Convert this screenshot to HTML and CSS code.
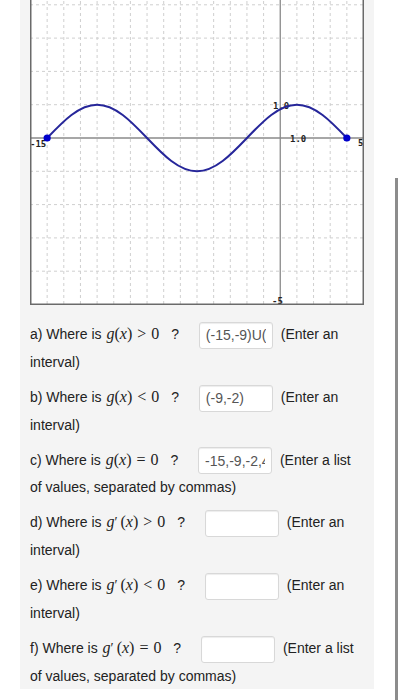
FILE: index.html
```html
<!DOCTYPE html>
<html lang="en">
<head>
    <meta charset="UTF-8">
    <meta name="viewport" content="width=device-width, initial-scale=1.0">
    <title>Graph of g(x)</title>
    <link rel="stylesheet" href="styles.css">
</head>
<body>

    <div class="panel">
        <div class="graph">
            <svg width="334" height="334" viewBox="0 0 334 334">
                <!-- grid: 1 unit = 16.65px across, 33.3px up -->
                <g class="grid">
                    <line x1="17.15" y1="0" x2="17.15" y2="334"/>
                    <line x1="33.8" y1="0" x2="33.8" y2="334"/>
                    <line x1="50.45" y1="0" x2="50.45" y2="334"/>
                    <line x1="67.1" y1="0" x2="67.1" y2="334"/>
                    <line x1="83.75" y1="0" x2="83.75" y2="334"/>
                    <line x1="100.4" y1="0" x2="100.4" y2="334"/>
                    <line x1="117.05" y1="0" x2="117.05" y2="334"/>
                    <line x1="133.7" y1="0" x2="133.7" y2="334"/>
                    <line x1="150.35" y1="0" x2="150.35" y2="334"/>
                    <line x1="167" y1="0" x2="167" y2="334"/>
                    <line x1="183.65" y1="0" x2="183.65" y2="334"/>
                    <line x1="200.3" y1="0" x2="200.3" y2="334"/>
                    <line x1="216.95" y1="0" x2="216.95" y2="334"/>
                    <line x1="233.6" y1="0" x2="233.6" y2="334"/>
                    <line x1="266.9" y1="0" x2="266.9" y2="334"/>
                    <line x1="283.55" y1="0" x2="283.55" y2="334"/>
                    <line x1="300.2" y1="0" x2="300.2" y2="334"/>
                    <line x1="316.85" y1="0" x2="316.85" y2="334"/>
                    <line x1="0" y1="33.8" x2="334" y2="33.8"/>
                    <line x1="0" y1="67.1" x2="334" y2="67.1"/>
                    <line x1="0" y1="100.4" x2="334" y2="100.4"/>
                    <line x1="0" y1="133.7" x2="334" y2="133.7"/>
                    <line x1="0" y1="200.3" x2="334" y2="200.3"/>
                    <line x1="0" y1="233.6" x2="334" y2="233.6"/>
                    <line x1="0" y1="266.9" x2="334" y2="266.9"/>
                    <line x1="0" y1="300.2" x2="334" y2="300.2"/>
                </g>
                <g class="axes">
                    <line x1="0" y1="167" x2="334" y2="167"/>
                    <line x1="250.25" y1="0" x2="250.25" y2="334"/>
                </g>
                <g class="labels">
                    <text x="243" y="138">1.0</text>
                    <text x="260" y="171">1.0</text>
                    <text x="0" y="176">-15</text>
                    <text x="328" y="175">5</text>
                    <text x="242" y="333">-5</text>
                </g>
                <path class="curve" d="M17.15,167 C33.44,149.94 49.02,133.7 67.1,133.7 C85.18,133.7 100.76,149.94 117.05,167 C133.34,184.06 148.92,200.3 167,200.3 C185.08,200.3 200.66,184.06 216.95,167 C233.24,149.94 248.82,133.7 266.9,133.7 C284.98,133.7 300.56,149.94 316.85,167"/>
                <circle class="dot" cx="17.15" cy="167" r="3.6"/>
                <circle class="dot" cx="316.85" cy="167" r="3.6"/>
                <rect class="frame" x="0.75" y="0.75" width="332.5" height="332.5"/>
            </svg>
        </div>

        <div class="questions">
            <p class="question">a) Where is <span class="math"><i>g</i>(<i>x</i>) <span class="rel">&gt;</span> 0</span> <span class="mark">?</span> <input class="answer" type="text" value="(-15,-9)U(-2,4)"> (Enter an interval)</p>
            <p class="question">b) Where is <span class="math"><i>g</i>(<i>x</i>) <span class="rel">&lt;</span> 0</span> <span class="mark">?</span> <input class="answer" type="text" value="(-9,-2)"> (Enter an interval)</p>
            <p class="question">c) Where is <span class="math"><i>g</i>(<i>x</i>) <span class="rel">=</span> 0</span> <span class="mark">?</span> <input class="answer" type="text" value="-15,-9,-2,4"> (Enter a list of values, separated by commas)</p>
            <p class="question">d) Where is <span class="math"><i>g</i><span class="prime">′</span>(<i>x</i>) <span class="rel">&gt;</span> 0</span> <span class="mark">?</span> <input class="answer" type="text" value=""> (Enter an interval)</p>
            <p class="question">e) Where is <span class="math"><i>g</i><span class="prime">′</span>(<i>x</i>) <span class="rel">&lt;</span> 0</span> <span class="mark">?</span> <input class="answer" type="text" value=""> (Enter an interval)</p>
            <p class="question">f) Where is <span class="math"><i>g</i><span class="prime">′</span>(<i>x</i>) <span class="rel">=</span> 0</span> <span class="mark">?</span> <input class="answer" type="text" value=""> (Enter a list of values, separated by commas)</p>
        </div>
    </div>

    <div class="scroll-thumb"></div>

</body>
</html>
```

FILE: styles.css
```css
body {
    margin: 0;
    background-color: #fff;
    font-family: "Liberation Sans", Arial, sans-serif;
    color: #222;
    overflow: hidden;
}

.panel {
    width: 334px;
    min-height: 700px;
    margin-left: 20px;
    padding: 0 10px;
    background-color: #f4f4f4;
}

.graph {
    margin-top: -29px;
    height: 334px;
}

.graph svg {
    display: block;
    background-color: #fff;
}

.grid line {
    stroke: #cfcfcf;
    stroke-width: 1;
    stroke-dasharray: 3 3;
}

.axes line {
    stroke: #8a8a8a;
    stroke-width: 1.3;
}

.frame {
    fill: none;
    stroke: #6a6a6a;
    stroke-width: 1.5;
}

.labels text {
    font-family: "DejaVu Sans Mono", monospace;
    font-size: 9px;
    font-weight: bold;
    fill: #222;
}

.curve {
    fill: none;
    stroke: #26269a;
    stroke-width: 2;
}

.dot {
    fill: #0000cc;
}

.questions {
    padding-top: 16px;
}

.question {
    margin: 0 0 9px;
    font-size: 14px;
    line-height: 26px;
}

.math {
    font-family: "Liberation Serif", "Times New Roman", serif;
    font-size: 16px;
    margin-left: 1px;
}

.math .rel {
    margin: 0 1px;
}

.math .prime {
    font-size: 14px;
    margin-right: 3px;
}

.mark {
    margin-left: 8px;
}

.answer {
    width: 74px;
    height: 27px;
    box-sizing: border-box;
    margin-left: 16px;
    margin-right: 4px;
    padding: 0 6px;
    vertical-align: middle;
    border: 1px solid #d8d8d8;
    border-radius: 3px;
    box-shadow: inset 0 1px 1px rgba(0, 0, 0, 0.075);
    background-color: #fff;
    font-family: "Liberation Sans", Arial, sans-serif;
    font-size: 14px;
    color: #555;
}

.scroll-thumb {
    position: fixed;
    left: 395px;
    top: 178px;
    width: 3px;
    height: 530px;
    background-color: #8c8c8c;
}
```
